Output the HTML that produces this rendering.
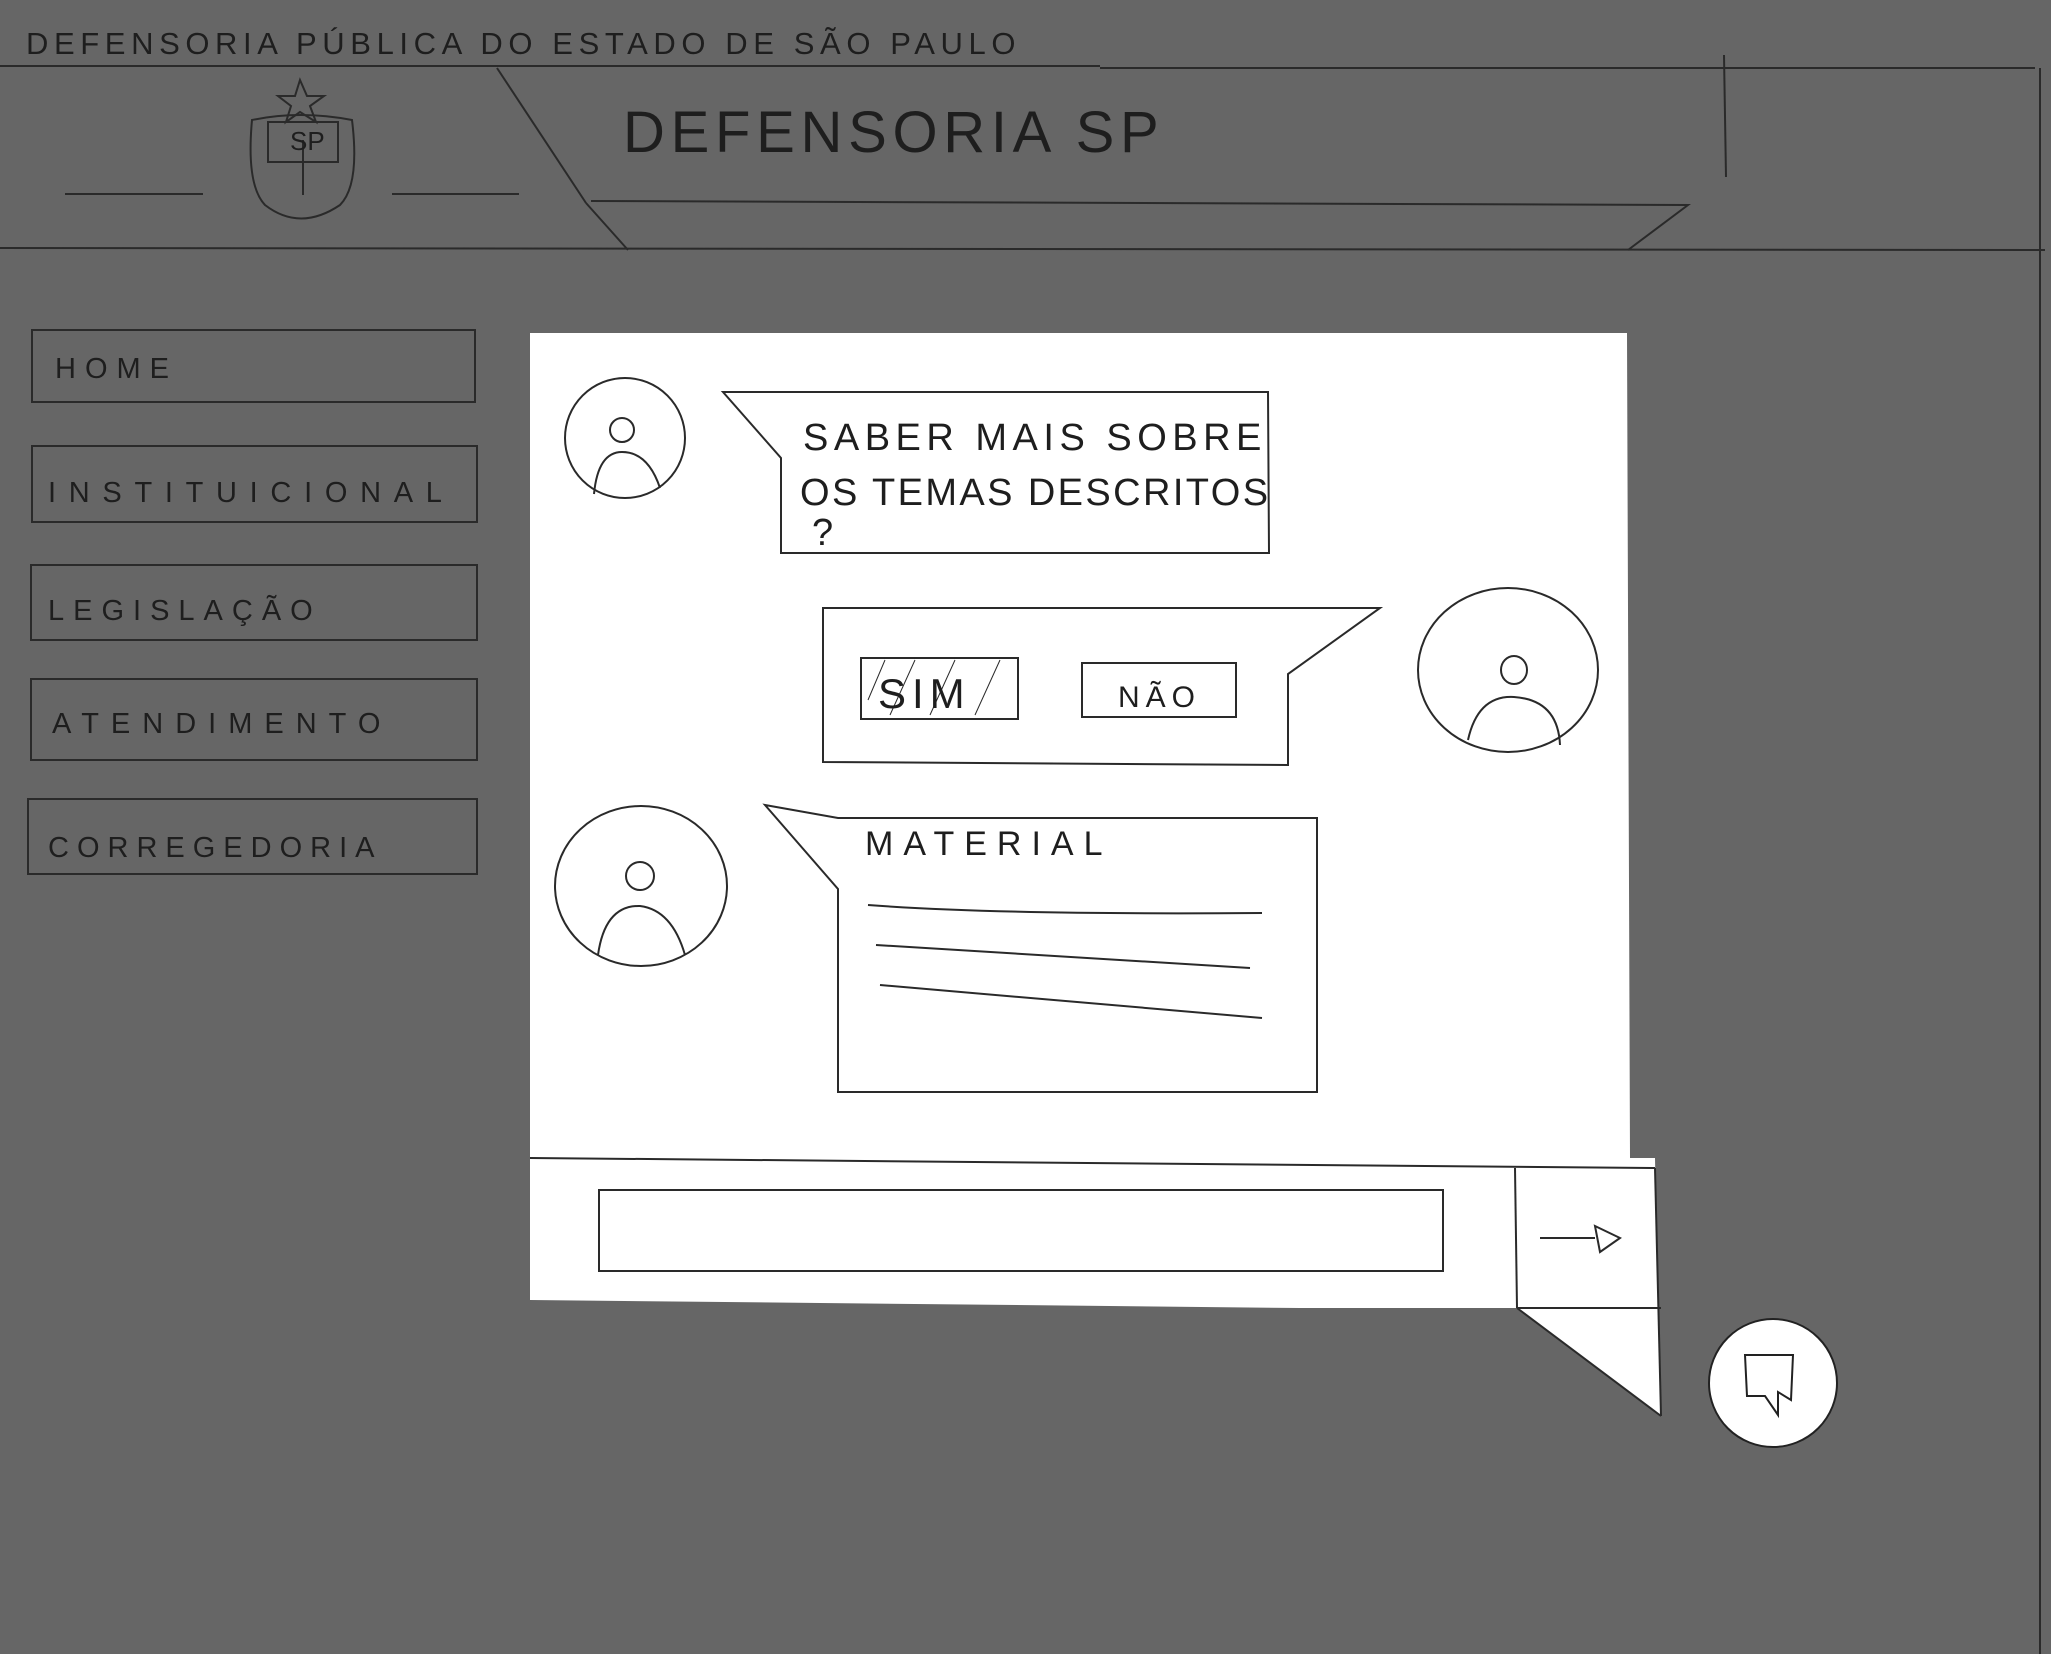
<!DOCTYPE html>
<html><head><meta charset="utf-8"><style>
html,body{margin:0;padding:0;background:#666;}
svg{display:block}
text{font-family:"Liberation Sans",sans-serif;fill:#1e1e1e;}
</style></head><body>
<svg width="2051" height="1654" viewBox="0 0 2051 1654" xmlns="http://www.w3.org/2000/svg">
<rect width="2051" height="1654" fill="#666"/>
<g stroke="#2a2a2a" stroke-width="2" fill="none">
<line x1="0" y1="66" x2="1100" y2="66"/>
<line x1="1100" y1="68" x2="2035" y2="68"/>
<line x1="0" y1="248" x2="2045" y2="250"/>
<line x1="2040" y1="68" x2="2040" y2="1654"/>
<line x1="1724" y1="55" x2="1726" y2="177"/>
<line x1="65" y1="194" x2="203" y2="194"/>
<line x1="392" y1="194" x2="519" y2="194"/>
<line x1="497" y1="68" x2="586" y2="203"/>
<line x1="586" y1="203" x2="628" y2="250"/>
<polyline points="591,201 1688,205 1628,250"/>
<path d="M252 120 Q246 185 265 205 Q300 232 340 205 Q360 185 352 120 Q300 110 252 120Z"/>
<rect x="268" y="122" width="70" height="40"/>
<line x1="303" y1="140" x2="303" y2="195"/>
<polygon points="300,80 307,96 324,96 310,106 316,122 300,112 286,122 291,106 278,96 295,96"/>
<rect x="32" y="330" width="443" height="72"/>
<rect x="32" y="446" width="445" height="76"/>
<rect x="31" y="565" width="446" height="75"/>
<rect x="31" y="679" width="446" height="81"/>
<rect x="28" y="799" width="449" height="75"/>
</g>
<text x="26" y="54" font-size="31" letter-spacing="5.6">DEFENSORIA PÚBLICA DO ESTADO DE SÃO PAULO</text>
<text x="623" y="152" font-size="58" letter-spacing="5.7" font-weight="300">DEFENSORIA SP</text>
<text x="290" y="150" font-size="26">SP</text>
<g font-size="29">
<text x="55" y="378" letter-spacing="9">HOME</text>
<text x="48" y="502" letter-spacing="12.7">INSTITUICIONAL</text>
<text x="48" y="620" letter-spacing="9">LEGISLAÇÃO</text>
<text x="52" y="733" letter-spacing="12">ATENDIMENTO</text>
<text x="48" y="857" letter-spacing="8">CORREGEDORIA</text>
</g>
<path d="M530 333 L1627 333 L1630 1158 L1655 1158 L1658 1308 L1661 1416 L1517 1308 L1300 1308 L530 1300 Z" fill="#fff"/>
<g stroke="#2a2a2a" stroke-width="2" fill="none">
<line x1="530" y1="1158" x2="1655" y2="1168"/>
<rect x="599" y="1190" width="844" height="81"/>
<line x1="1515" y1="1168" x2="1517" y2="1308"/>
<line x1="1517" y1="1308" x2="1661" y2="1308"/>
<line x1="1517" y1="1308" x2="1661" y2="1416"/>
<line x1="1655" y1="1168" x2="1661" y2="1416"/>
<line x1="1540" y1="1238" x2="1595" y2="1238"/>
<polygon points="1595,1226 1620,1238 1600,1252"/>
<circle cx="625" cy="438" r="60"/><circle cx="622" cy="430" r="12"/><path d="M594 494 Q598 452 622 452 Q648 452 660 488"/>
<ellipse cx="1508" cy="670" rx="90" ry="82"/><ellipse cx="1514" cy="670" rx="13" ry="14"/><path d="M1468 740 Q1478 695 1514 697 Q1558 700 1560 745"/>
<ellipse cx="641" cy="886" rx="86" ry="80"/><circle cx="640" cy="876" r="14"/><path d="M598 955 Q605 905 640 906 Q672 910 685 955"/>
<path d="M723 392 L1268 392 L1269 553 L781 553 L781 458 Z"/>
<path d="M823 608 L1380 608 L1288 674 L1288 765 L823 762 Z"/>
<path d="M765 805 L838 818 L1317 818 L1317 1092 L838 1092 L838 889 Z"/>
<rect x="861" y="658" width="157" height="61"/>
<rect x="1082" y="663" width="154" height="54"/>
<path d="M868 700 L885 660 M890 715 L915 660 M930 715 L955 660 M975 715 L1000 660" stroke-width="1"/>
<path d="M868 905 Q1000 915 1262 913" /><path d="M876 945 Q1050 955 1250 968"/><path d="M880 985 Q1000 995 1262 1018"/>
</g>
<g font-size="38">
<text x="803" y="450" letter-spacing="5.5">SABER MAIS SOBRE</text>
<text x="800" y="505" letter-spacing="2.4">OS TEMAS DESCRITOS</text>
<text x="812" y="545">?</text>
<text x="878" y="708" font-size="42" letter-spacing="6">SIM</text>
<text x="1118" y="707" font-size="30" letter-spacing="6">NÃO</text>
<text x="865" y="855" font-size="34" letter-spacing="10">MATERIAL</text>
</g>
<circle cx="1773" cy="1383" r="64" fill="#fff" stroke="#222" stroke-width="2"/>
<path d="M1745 1355 L1793 1355 L1791 1400 L1778 1392 L1778 1415 L1765 1396 L1747 1396 Z" fill="none" stroke="#222" stroke-width="2"/>
</svg>
</body></html>
